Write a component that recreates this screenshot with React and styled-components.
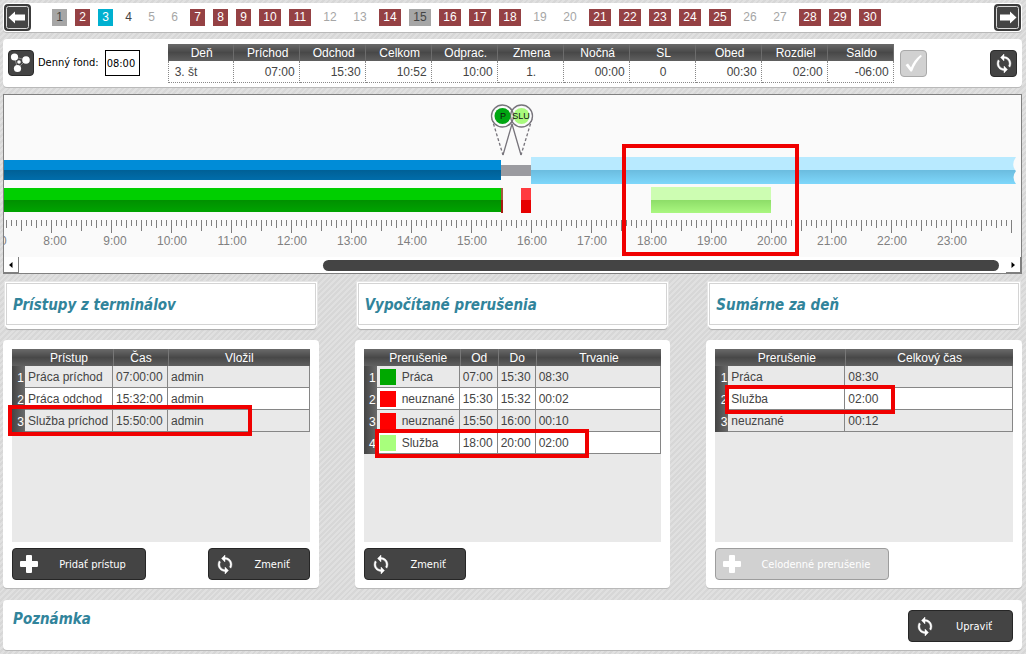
import React from "react";
import styled, { createGlobalStyle, css } from "styled-components";

const SANS = '"Liberation Sans", Arial, sans-serif';
const UI = '"DejaVu Sans Condensed", "DejaVu Sans", Tahoma, sans-serif';

const GlobalStyle = createGlobalStyle`
  *, *::before, *::after { box-sizing: border-box; }
  html { min-height: 100%; }
  body {
    margin: 0;
    background: repeating-linear-gradient(135deg, #d7d7d7 0 2px, #e0e0e0 2px 4px);
    font: 12px/16px ${SANS};
    color: #444;
  }
  h2 { margin: 0; }
  button, input { font: inherit; }
`;

const darkHeader = "linear-gradient(#6a6a6a, #484848 50%, #606060)";

const Page = styled.main`
  display: flex;
  flex-direction: column;
  padding: 3px 4px 4px 3px;
`;

const Panel = styled.section`
  background: #fff;
  border-radius: 4px;
  box-shadow: 0 1px 0 #b9b9b9;
`;

const DayBar = styled(Panel).attrs({ as: "nav" })`
  display: flex;
  align-items: center;
  height: 29px;
  padding: 0 1px;
`;

const NavButton = styled.button`
  width: 27px;
  height: 27px;
  padding: 0;
  border: 0;
  background: none;
  flex: none;
  svg { display: block; }
`;

const Days = styled.div`
  display: flex;
  flex: 1;
  gap: 8px;
  padding-left: 21px;
`;

const dayKinds = {
  gray: css`background: #a6a6a6; color: #444;`,
  red: css`background: #954144; color: #fff;`,
  active: css`background: #00b0d0; color: #fff;`,
  plain: css`background: none; color: #444;`,
  off: css`background: none; color: #a6a6a6;`,
};

const Day = styled.button`
  width: ${(p) => (p.$wide ? 22 : 15)}px;
  height: 17px;
  padding: 0;
  border: 0;
  text-align: center;
  line-height: 17px;
  ${(p) => dayKinds[p.$kind]}
`;

const Summary = styled(Panel)`
  display: flex;
  align-items: center;
  height: 48px;
  margin-top: 7px;
  padding: 0 5px;
`;

const Square = styled.button`
  display: flex;
  align-items: center;
  justify-content: center;
  flex: none;
  width: ${(p) => p.$size}px;
  height: ${(p) => p.$size}px;
  padding: 0;
  border: 1px solid ${(p) => (p.disabled ? "#a9a9a9" : "#2b2b2b")};
  border-radius: 4px;
  background: ${(p) => (p.disabled ? "#d1d1d1" : "#444")};
`;

const FundLabel = styled.label`
  display: flex;
  align-items: center;
  gap: 6px;
  margin-left: 4px;
  font: 11px/16px ${UI};
  color: #000;
  white-space: nowrap;
`;

const FundInput = styled.input`
  width: 35px;
  height: 26px;
  padding: 1px 1px 0;
  border: 1px solid #000;
  background: #fff;
  color: #000;
`;

const SummaryTable = styled.table`
  flex: 0 1 auto;
  width: 726px;
  margin: 0 6px 0 28px;
  border-collapse: separate;
  border-spacing: 0;
  table-layout: fixed;
  th {
    height: 17px;
    padding: 2px 0 0 2px;
    background: ${darkHeader};
    color: #fff;
    font-weight: normal;
    line-height: 15px;
    box-shadow: inset -1px 0 0 #6c6c6c;
  }
  td {
    height: 22px;
    padding: 2px 4px 0 6px;
    border-right: 1px dotted #888;
    border-bottom: 1px dotted #888;
    text-align: right;
    line-height: 19px;
  }
  td:first-child { border-left: 1px dotted #888; }
`;

const SummaryCell = styled.td`
  && { text-align: ${(p) => p.$align || "right"}; }
`;

const Spacer = styled.div`
  flex: 1;
`;

const Timeline = styled.section`
  position: relative;
  height: 180px;
  margin-top: 7px;
  border: 1px solid #808080;
  background: #fafafa;
  overflow: hidden;
  > svg { display: block; }
`;

const ScrollBar = styled.div`
  display: flex;
  align-items: center;
  justify-content: space-between;
  height: 16px;
  background: #fff;
`;

const ScrollButton = styled.button`
  display: flex;
  align-items: center;
  justify-content: center;
  width: 15px;
  height: 16px;
  padding: 0;
  border: 0;
  border-right: 1px solid #808080;
  border-bottom: 1px solid #808080;
  background: #fff;
`;

const Track = styled.div`
  flex: 1;
  display: flex;
  justify-content: flex-end;
  padding-right: 7px;
`;

const Thumb = styled.div`
  width: 69%;
  height: 11px;
  border-radius: 6px;
  background: #444;
`;

const Marker = styled.div`
  position: absolute;
  left: ${(p) => p.$x}px;
  top: ${(p) => p.$y}px;
  width: ${(p) => p.$w}px;
  height: ${(p) => p.$h}px;
  border: 4px solid #f00000;
  pointer-events: none;
`;

const Columns = styled.div`
  display: grid;
  grid-template-columns: repeat(3, minmax(0, 1fr));
  column-gap: 36px;
  margin-top: 7px;
`;

const Column = styled.div`
  display: flex;
  flex-direction: column;
`;

const TitleBox = styled.header`
  position: relative;
  height: 46px;
  margin: 0 1px 13px;
  padding: 1px;
  border: 1px solid #e6e6e6;
  background: #fff;
  &::after {
    content: "";
    position: absolute;
    left: 1px;
    right: 1px;
    top: 100%;
    height: 3px;
    border-radius: 0 0 5px 5px;
    background: #fff;
    box-shadow: 0 1px 1px #aaa;
  }
`;

const TitleFrame = styled.div`
  height: 100%;
  padding: 12px 6px 0;
  border: 1px solid #d4d4d4;
`;

const Title = styled.h2`
  font: italic bold 15px/18px ${UI};
  color: #31849b;
  white-space: nowrap;
`;

const ListPanel = styled(Panel)`
  display: flex;
  flex-direction: column;
  gap: 6px;
  padding: 9px 9px 8px;
`;

const GridArea = styled.div`
  position: relative;
  height: 193px;
  background: #e9e9e9;
`;

const Grid = styled.table`
  width: 100%;
  border-collapse: separate;
  border-spacing: 0;
  table-layout: fixed;
  thead th {
    height: 17px;
    padding: 2px 0 0;
    background: ${darkHeader};
    color: #fff;
    font-weight: normal;
    line-height: 15px;
  }
  thead th + th + th { border-left: 1px solid #777; }
  tbody th {
    padding: 2px 1px 0 0;
    background: linear-gradient(90deg, #444, #6a6a6a);
    color: #fff;
    font-weight: normal;
    text-align: right;
  }
  tbody td {
    height: 22px;
    padding: 2px 2px 0 3px;
    border-right: 1px solid #868686;
    border-bottom: 1px solid #868686;
    background: #e9e9e9;
    line-height: 19px;
    white-space: nowrap;
  }
  tbody tr:nth-child(even) td { background: #fff; }
`;

const Col = styled.col`
  width: ${(p) => (p.$w ? `${p.$w}px` : "auto")};
`;

const Swatched = styled.span`
  display: flex;
  align-items: center;
  gap: 6px;
`;

const Swatch = styled.i`
  width: 16px;
  height: 16px;
  margin-bottom: 2px;
  background: ${(p) => p.$color};
`;

const Actions = styled.div`
  display: flex;
  justify-content: space-between;
`;

const Action = styled.button`
  display: flex;
  align-items: center;
  width: ${(p) => p.$w}px;
  height: 32px;
  padding: 0 0 0 7px;
  border: 1px solid ${(p) => (p.disabled ? "#9d9d9d" : "#262626")};
  border-radius: 4px;
  background: ${(p) => (p.disabled ? "#d1d1d1" : "#444")};
  color: #fff;
  font: 11px/16px ${UI};
  white-space: nowrap;
  svg { flex: none; }
  span { flex: 1; padding: 2px 0 0 2px; text-align: center; }
`;

const Note = styled(Panel)`
  display: flex;
  justify-content: space-between;
  height: 50px;
  margin-top: 12px;
  padding: 10px 9px 8px 10px;
`;

function ArrowIcon({ right }) {
  return (
    <svg width="27" height="27" viewBox="0 0 27 27" aria-hidden="true">
      <rect width="27" height="27" rx="4" fill="#3c3c3c" />
      <rect x="2.500" y="2.500" width="22" height="22" rx="2" fill="#444" stroke="#d8d8d8" />
      <path
        d="M4.500 13.500 11 7.500V10.500H21V16.500H11V19.500Z"
        fill="#fff"
        transform={right ? "rotate(180 13.5 13.5)" : undefined}
      />
    </svg>
  );
}

function RefreshIcon() {
  return (
    <svg width="18" height="19" viewBox="4 1 16 22" aria-hidden="true">
      <path
        d="M12 4V1L8 5l4 4V6c3.310 0 6 2.690 6 6 0 1.010-.25 1.970-.7 2.800l1.460 1.460C19.540 15.030 20 13.570 20 12c0-4.420-3.580-8-8-8zm0 14c-3.310 0-6-2.690-6-6 0-1.010.25-1.970.7-2.800L5.240 7.740C4.460 8.970 4 10.430 4 12c0 4.420 3.580 8 8 8v3l4-4-4-4v3z"
        fill="#fff"
        stroke="#fff"
        strokeWidth=".5"
      />
    </svg>
  );
}

function PlusIcon() {
  return (
    <svg width="18" height="18" viewBox="0 0 18 18" aria-hidden="true">
      <path
        d="M7 0h4q1 0 1 1v5h5q1 0 1 1v4q0 1-1 1h-5v5q0 1-1 1H7q-1 0-1-1v-5H1q-1 0-1-1V7q0-1 1-1h5V1q0-1 1-1Z"
        fill="#fff"
      />
    </svg>
  );
}

function NodesIcon() {
  return (
    <svg width="24" height="24" viewBox="0 0 24 24" aria-hidden="true">
      <path d="M5.500 6 17 9 8.500 17.500Z" fill="none" stroke="#8a8a8a" />
      <circle cx="5.500" cy="6" r="3.600" fill="#fff" />
      <circle cx="17" cy="9" r="3.800" fill="#fff" />
      <circle cx="8.500" cy="17.500" r="3.600" fill="#fff" />
      <circle cx="10" cy="11" r="1.800" fill="#fff" />
    </svg>
  );
}

const HOUR = 60;
const xAt = (hour) => 47 + (hour - 8) * HOUR;

const bands = [
  { x: 0, end: 497, y: 65, mid: 75, bottom: 85, light: "#008cd7", dark: "url(#blue)" },
  { x: 0, end: 497, y: 93, mid: 105, bottom: 117, light: "#00cf00", dark: "url(#green)" },
  { x: 497, end: 499, y: 93, mid: 105, bottom: 118, light: "#a35a3c", dark: "#a51d14" },
  { x: 517, end: 527, y: 93, mid: 105, bottom: 118, light: "#ff3a3f", dark: "#e60000" },
  { x: 647, end: 767, y: 92, mid: 105, bottom: 118, light: "#cdfdb2", dark: "url(#lime)" },
];

function Chart() {
  const ticks = [];
  for (let m = 0; m <= 201; m++) {
    const x = 2.5 + m * 5;
    const minute = (m + 3) % 12;
    const len = minute === 0 ? 13 : minute === 6 ? 11 : minute % 3 === 0 ? 8 : 6;
    ticks.push(<path key={m} d={`M${x} 125v${len}`} />);
  }
  return (
    <svg width="1018" height="162" role="img" aria-label="Časová os dňa">
      <defs>
        <linearGradient id="blue" x2="0" y2="1"><stop stopColor="#006096" /><stop offset="1" stopColor="#006dab" /></linearGradient>
        <linearGradient id="green" x2="0" y2="1"><stop stopColor="#009000" /><stop offset="1" stopColor="#00a400" /></linearGradient>
        <linearGradient id="sky" x2="0" y2="1"><stop stopColor="#6bbcdf" /><stop offset="1" stopColor="#7ed7fb" /></linearGradient>
        <linearGradient id="lime" x2="0" y2="1"><stop stopColor="#8ddd68" /><stop offset="1" stopColor="#aaf780" /></linearGradient>
      </defs>
      {bands.map((b, i) => (
        <g key={i}>
          <rect x={b.x} y={b.y} width={b.end - b.x} height={b.mid - b.y} fill={b.light} />
          <rect x={b.x} y={b.mid} width={b.end - b.x} height={b.bottom - b.mid} fill={b.dark} />
        </g>
      ))}
      <rect x="497" y="70" width="30" height="11" fill="#9b9ba0" />
      <path d="M527 62H1012Q1007 69 1011 75H527Z" fill="#b8eaff" />
      <path d="M527 75H1011L1012 76Q1007 82 1012 89H527Z" fill="url(#sky)" />
      <g stroke="#808080">{ticks}</g>
      <g fill="#808080" fontFamily={SANS} fontSize="12" textAnchor="middle">
        {Array.from({ length: 17 }, (_, i) => i + 7).map((h) => (
          <text key={h} x={xAt(h) + (h < 10 ? 4 : 1)} y="150">{`${h}:00`}</text>
        ))}
      </g>
      <g fill="none" stroke="#77747b" strokeWidth="1.3">
        <path d="M508 29 499 60M508 29 517 60" />
        <path d="M488 24 499 60M528 24 517 60" strokeDasharray="3 2" />
        <circle cx="498.500" cy="21" r="11" fill="#fafafa" />
        <circle cx="517.500" cy="21" r="11" fill="#fafafa" />
        <path d="M504 11.500A11 11 0 0 1 504 30.500" />
      </g>
      <circle cx="498.500" cy="21" r="8" fill="#00a612" />
      <circle cx="517.500" cy="21" r="8" fill="#a8fa7d" />
      <g fill="#111" fontFamily={SANS} fontSize="9" textAnchor="middle">
        <text x="499" y="24">P</text>
        <text x="517" y="24">SLU</text>
      </g>
    </svg>
  );
}

const dayKind = (d) => {
  if (d === 3) return "active";
  if (d === 1 || d === 15) return "gray";
  if (d === 4) return "plain";
  if ([5, 6, 12, 13, 19, 20, 26, 27].includes(d)) return "off";
  return "red";
};

const summary = [
  ["Deň", "3. št", "left"],
  ["Príchod", "07:00"],
  ["Odchod", "15:30"],
  ["Celkom", "10:52"],
  ["Odprac.", "10:00"],
  ["Zmena", "1.", "center"],
  ["Nočná", "00:00"],
  ["SL", "0", "center"],
  ["Obed", "00:30"],
  ["Rozdiel", "02:00"],
  ["Saldo", "-06:00"],
];

function DataGrid({ heads, widths, rows, marker }) {
  return (
    <GridArea>
      <Grid>
        <colgroup>
          <Col $w={13} />
          {widths.map((w, i) => <Col key={i} $w={w} />)}
        </colgroup>
        <thead>
          <tr>
            <th />
            {heads.map((h) => <th key={h} scope="col">{h}</th>)}
          </tr>
        </thead>
        <tbody>
          {rows.map((row, i) => (
            <tr key={i}>
              <th scope="row">{i + 1}</th>
              {row.map((cell, j) => <td key={j}>{cell}</td>)}
            </tr>
          ))}
        </tbody>
      </Grid>
      <Marker {...marker} />
    </GridArea>
  );
}

const swatch = (color, name) => (
  <Swatched><Swatch $color={color} />{name}</Swatched>
);

function Section({ title, children }) {
  return (
    <Column>
      <TitleBox><TitleFrame><Title>{title}</Title></TitleFrame></TitleBox>
      <ListPanel>{children}</ListPanel>
    </Column>
  );
}

export default function App() {
  return (
    <>
      <GlobalStyle />
      <Page>
        <DayBar>
          <NavButton aria-label="Predchádzajúci mesiac"><ArrowIcon /></NavButton>
          <Days>
            {Array.from({ length: 30 }, (_, i) => i + 1).map((d) => (
              <Day key={d} $wide={d > 9} $kind={dayKind(d)}>{d}</Day>
            ))}
          </Days>
          <NavButton aria-label="Nasledujúci mesiac"><ArrowIcon right /></NavButton>
        </DayBar>

        <Summary>
          <Square $size={26} aria-label="Skupina"><NodesIcon /></Square>
          <FundLabel>
            Denný fond:
            <FundInput defaultValue="08:00" />
          </FundLabel>
          <SummaryTable>
            <thead>
              <tr>{summary.map(([h]) => <th key={h} scope="col">{h}</th>)}</tr>
            </thead>
            <tbody>
              <tr>{summary.map(([h, v, a]) => <SummaryCell key={h} $align={a}>{v}</SummaryCell>)}</tr>
            </tbody>
          </SummaryTable>
          <Square $size={27} disabled aria-label="Potvrdiť">
            <svg width="19" height="19" viewBox="0 0 19 19" aria-hidden="true">
              <path d="M1.500 11 4 9.500 7 13.500Q10 6 16.500 1L18 2Q11.500 8 8 17.500H6.500Z" fill="#fff" />
            </svg>
          </Square>
          <Spacer />
          <Square $size={27} aria-label="Obnoviť"><RefreshIcon /></Square>
        </Summary>

        <Timeline>
          <Chart />
          <ScrollBar>
            <ScrollButton aria-label="Doľava">
              <svg width="4" height="6" viewBox="0 0 4 6"><path d="M3.500 0V6L0 3Z" /></svg>
            </ScrollButton>
            <Track><Thumb /></Track>
            <ScrollButton aria-label="Doprava">
              <svg width="4" height="6" viewBox="0 0 4 6"><path d="M.5 0V6L4 3Z" /></svg>
            </ScrollButton>
          </ScrollBar>
          <Marker $x={618} $y={49} $w={177} $h={112} />
        </Timeline>

        <Columns>
          <Section title="Prístupy z terminálov">
            <DataGrid
              heads={["Prístup", "Čas", "Vložil"]}
              widths={[88, 55, null]}
              rows={[
                ["Práca príchod", "07:00:00", "admin"],
                ["Práca odchod", "15:32:00", "admin"],
                ["Služba príchod", "15:50:00", "admin"],
              ]}
              marker={{ $x: -4, $y: 56, $w: 244, $h: 31 }}
            />
            <Actions>
              <Action $w={134}><PlusIcon /><span>Pridať prístup</span></Action>
              <Action $w={102}><RefreshIcon /><span>Zmeniť</span></Action>
            </Actions>
          </Section>
          <Section title="Vypočítané prerušenia">
            <DataGrid
              heads={["Prerušenie", "Od", "Do", "Trvanie"]}
              widths={[83, 38, 38, null]}
              rows={[
                [swatch("#00a800", "Práca"), "07:00", "15:30", "08:30"],
                [swatch("#ff0000", "neuznané"), "15:30", "15:32", "00:02"],
                [swatch("#ff0000", "neuznané"), "15:50", "16:00", "00:10"],
                [swatch("#a8ff7c", "Služba"), "18:00", "20:00", "02:00"],
              ]}
              marker={{ $x: 11, $y: 80, $w: 214, $h: 29 }}
            />
            <Actions>
              <Action $w={102}><RefreshIcon /><span>Zmeniť</span></Action>
            </Actions>
          </Section>
          <Section title="Sumárne za deň">
            <DataGrid
              heads={["Prerušenie", "Celkový čas"]}
              widths={[117, null]}
              rows={[
                ["Práca", "08:30"],
                ["Služba", "02:00"],
                ["neuznané", "00:12"],
              ]}
              marker={{ $x: 10, $y: 36, $w: 170, $h: 29 }}
            />
            <Actions>
              <Action $w={174} disabled><PlusIcon /><span>Celodenné prerušenie</span></Action>
            </Actions>
          </Section>
        </Columns>

        <Note>
          <Title>Poznámka</Title>
          <Action $w={105}><RefreshIcon /><span>Upraviť</span></Action>
        </Note>
      </Page>
    </>
  );
}
